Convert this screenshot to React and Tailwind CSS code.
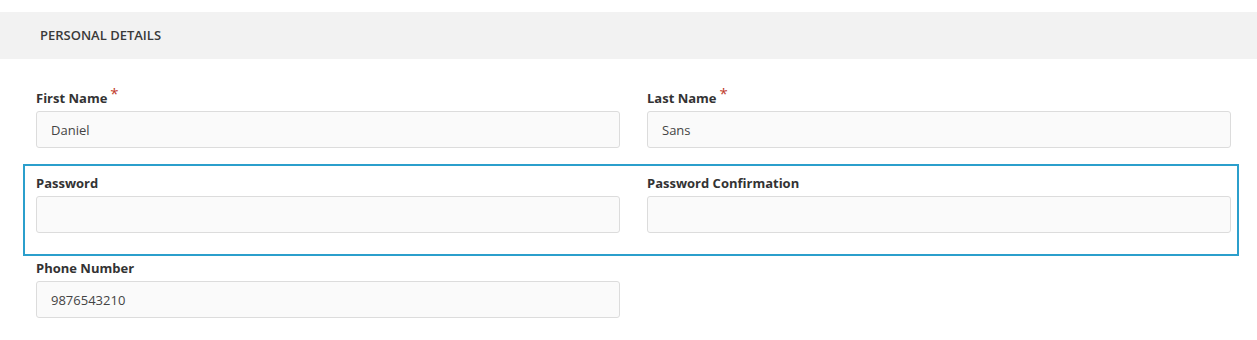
const fieldClass =
  'w-full h-[37px] px-[14px] bg-[#fafafa] border border-[#dcdcdc] rounded-[3px] text-[13px] text-[#444] outline-none';

function Field({ label, required, value, type = 'text' }) {
  return (
    <div>
      <label className="block h-[20px] leading-[20px] text-[13px] font-bold text-[#333] mb-[3px]">
        {label}
        {required && <span className="text-[#c0392b] text-[15px] font-normal align-top relative top-[-2px] ml-[3px] leading-none">*</span>}
      </label>
      <input type={type} defaultValue={value} className={fieldClass} />
    </div>
  );
}

export default function App() {
  return (
    <div className="w-[1257px] h-[340px] bg-white pt-[12px] font-['Open_Sans',sans-serif]">
      <div className="h-[47px] bg-[#f2f2f2] flex items-center pl-[40px]">
        <h2 className="text-[13px] font-semibold text-[#3a3a3a] uppercase">Personal Details</h2>
      </div>

      <div className="mt-[27px] ml-[23px] w-[1216px] border-2 border-transparent pl-[11px] pr-[6px]">
        <div className="grid grid-cols-2 gap-x-[27px]">
          <Field label="First Name" required value="Daniel" />
          <Field label="Last Name" required value="Sans" />
        </div>
      </div>

      <div className="mt-[14px] ml-[23px] w-[1216px] border-2 border-[#2b9fcc] pl-[11px] pr-[6px] pt-[7px] pb-[21px]">
        <div className="grid grid-cols-2 gap-x-[27px]">
          <Field label="Password" type="password" />
          <Field label="Password Confirmation" type="password" />
        </div>
      </div>

      <div className="mt-0 ml-[23px] w-[1216px] border-2 border-transparent pl-[11px] pr-[6px]">
        <div className="grid grid-cols-2 gap-x-[27px]">
          <Field label="Phone Number" value="9876543210" />
        </div>
      </div>
    </div>
  );
}
